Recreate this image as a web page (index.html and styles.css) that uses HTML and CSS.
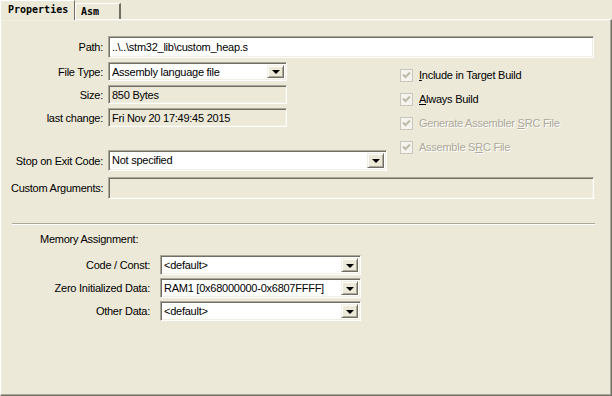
FILE: index.html
```html
<!DOCTYPE html>
<html lang="en">
<head>
  <meta charset="UTF-8" />
  <title>Properties</title>
  <link rel="stylesheet" href="styles.css">
</head>
<body>
  <div class="tabs">
    <div class="tab active">Properties</div>
    <div class="tab">Asm</div>
  </div>

  <div class="panel">
    <div class="row">
      <label class="lbl">Path:</label>
      <div class="field edit wide">..\..\stm32_lib\custom_heap.s</div>
    </div>

    <div class="mid">
      <div class="left">
        <div class="row">
          <label class="lbl">File Type:</label>
          <div class="field combo short">
            <span class="val">Assembly language file</span>
            <span class="drop"><i></i></span>
          </div>
        </div>
        <div class="row">
          <label class="lbl">Size:</label>
          <div class="field ro short">850 Bytes</div>
        </div>
        <div class="row">
          <label class="lbl">last change:</label>
          <div class="field ro short">Fri Nov 20 17:49:45 2015</div>
        </div>
        <div class="row stop">
          <label class="lbl">Stop on Exit Code:</label>
          <div class="field combo medium">
            <span class="val">Not specified</span>
            <span class="drop"><i></i></span>
          </div>
        </div>
      </div>

      <div class="checks">
        <div class="check"><span class="cb"><svg width="11" height="11" viewBox="0 0 11 11"><path d="M2 4.5 L4.5 7 L9 2.5" /></svg></span><span><u>I</u>nclude in Target Build</span></div>
        <div class="check"><span class="cb"><svg width="11" height="11" viewBox="0 0 11 11"><path d="M2 4.5 L4.5 7 L9 2.5" /></svg></span><span><u>A</u>lways Build</span></div>
        <div class="check off"><span class="cb"><svg width="11" height="11" viewBox="0 0 11 11"><path d="M2 4.5 L4.5 7 L9 2.5" /></svg></span><span>Generate Assembler <u>S</u>RC File</span></div>
        <div class="check off"><span class="cb"><svg width="11" height="11" viewBox="0 0 11 11"><path d="M2 4.5 L4.5 7 L9 2.5" /></svg></span><span>Assemble S<u>R</u>C File</span></div>
      </div>
    </div>

    <div class="row args">
      <label class="lbl">Custom Arguments:</label>
      <div class="field ro wide tall"></div>
    </div>

    <div class="sep"></div>

    <div class="mem-title">Memory Assignment:</div>

    <div class="mem">
      <div class="row">
        <label class="lbl">Code / Const:</label>
        <div class="field combo memsel">
          <span class="val">&lt;default&gt;</span>
          <span class="drop"><i></i></span>
        </div>
      </div>
      <div class="row">
        <label class="lbl">Zero Initialized Data:</label>
        <div class="field combo memsel">
          <span class="val">RAM1 [0x68000000-0x6807FFFF]</span>
          <span class="drop"><i></i></span>
        </div>
      </div>
      <div class="row">
        <label class="lbl">Other Data:</label>
        <div class="field combo memsel">
          <span class="val">&lt;default&gt;</span>
          <span class="drop"><i></i></span>
        </div>
      </div>
    </div>
  </div>
</body>
</html>
```

FILE: styles.css
```css
:root {
  --face: #ece9d8;
  --light: #f1efe2;
  --shadow: #aca899;
  --dark: #716f64;
}

* {
  box-sizing: border-box;
}

body {
  margin: 0;
  width: 612px;
  height: 396px;
  background: var(--face);
  font-family: 'Liberation Sans', Arial, sans-serif;
  font-size: 11px;
  letter-spacing: -0.25px;
  color: #000;
  overflow: hidden;
}

/* tab strip */
.tabs {
  display: flex;
  align-items: flex-end;
  height: 19px;
}

.tab {
  font-family: 'DejaVu Sans Mono', 'Liberation Mono', monospace;
  font-size: 10px;
  font-weight: bold;
  letter-spacing: 0;
  height: 16px;
  padding: 2px 0 0 5px;
  border-top: 1px solid #fff;
  border-left: 1px solid #fff;
  border-right: 2px solid var(--dark);
  width: 46px;
}

.tab.active {
  position: relative;
  z-index: 1;
  height: 20px;
  margin-bottom: -1px;
  width: 75px;
  padding: 3px 0 0 7px;
  background: var(--face);
  border-right: 1px solid var(--dark);
}

/* main page */
.panel {
  height: 377px;
  border-top: 1px solid #fff;
  border-left: 1px solid #fff;
  border-right: 1px solid var(--dark);
  border-bottom: 1px solid var(--dark);
  box-shadow: inset -1px -1px 0 var(--shadow), inset 1px 1px 0 var(--light);
  padding: 16px 16px 0 10px;
}

.row {
  display: flex;
  align-items: center;
  gap: 5px;
}

.lbl {
  width: 92px;
  text-align: right;
  white-space: nowrap;
  flex-shrink: 0;
}

.field {
  height: 19px;
  border-top: 1px solid var(--shadow);
  border-left: 1px solid var(--shadow);
  border-right: 1px solid #fff;
  border-bottom: 1px solid #fff;
  box-shadow: inset 1px 1px 0 var(--dark), inset -1px -1px 0 var(--light);
  padding: 2px 3px;
  line-height: 14px;
  white-space: nowrap;
  overflow: hidden;
}

.edit,
.combo {
  background: #fff;
}

.ro {
  background: var(--face);
}

.wide {
  width: 486px;
  height: 22px;
  padding-top: 3px;
}

.short {
  width: 179px;
}

.medium {
  width: 279px;
  height: 21px;
}

.combo {
  display: flex;
  align-items: stretch;
  padding: 2px;
}

.combo .val {
  flex: 1;
  padding-left: 1px;
  line-height: 14px;
}

.drop {
  width: 17px;
  background: var(--face);
  border-top: 1px solid var(--light);
  border-left: 1px solid var(--light);
  border-right: 1px solid var(--dark);
  border-bottom: 1px solid var(--dark);
  box-shadow: inset 1px 1px 0 #fff, inset -1px -1px 0 var(--shadow);
  display: flex;
  align-items: center;
  justify-content: center;
}

.drop i {
  width: 0;
  height: 0;
  border-left: 4px solid transparent;
  border-right: 4px solid transparent;
  border-top: 4px solid #000;
  margin-top: 1px;
}

/* file type / checkboxes block */
.mid {
  display: flex;
  margin-top: 4px;
}

.left {
  width: 389px;
  display: flex;
  flex-direction: column;
  gap: 4px;
}

.stop {
  margin-top: 19px;
}

.checks {
  padding-top: 1px;
}

.check {
  height: 24px;
  display: flex;
  align-items: center;
  gap: 6px;
}

.cb {
  width: 13px;
  height: 13px;
  border: 1px solid #c9c7ba;
  background: #f4f3ee;
  display: flex;
  align-items: center;
  justify-content: center;
}

.cb path {
  fill: none;
  stroke: #bdbaa8;
  stroke-width: 2;
}

.check.off {
  color: var(--shadow);
  text-shadow: 1px 1px 0 #fff;
}

.args {
  margin-top: 6px;
}

.tall {
  height: 22px;
}

.sep {
  margin: 24px 0 0 1px;
  width: 583px;
  border-top: 1px solid var(--shadow);
  border-bottom: 1px solid #fff;
}

.mem-title {
  margin: 7px 0 0 29px;
  line-height: 14px;
}

.mem {
  margin-top: 9px;
  display: flex;
  flex-direction: column;
  gap: 3px;
}

.mem .row {
  gap: 10px;
}

.mem .lbl {
  width: 139px;
}

.memsel {
  width: 201px;
  height: 20px;
}
```
